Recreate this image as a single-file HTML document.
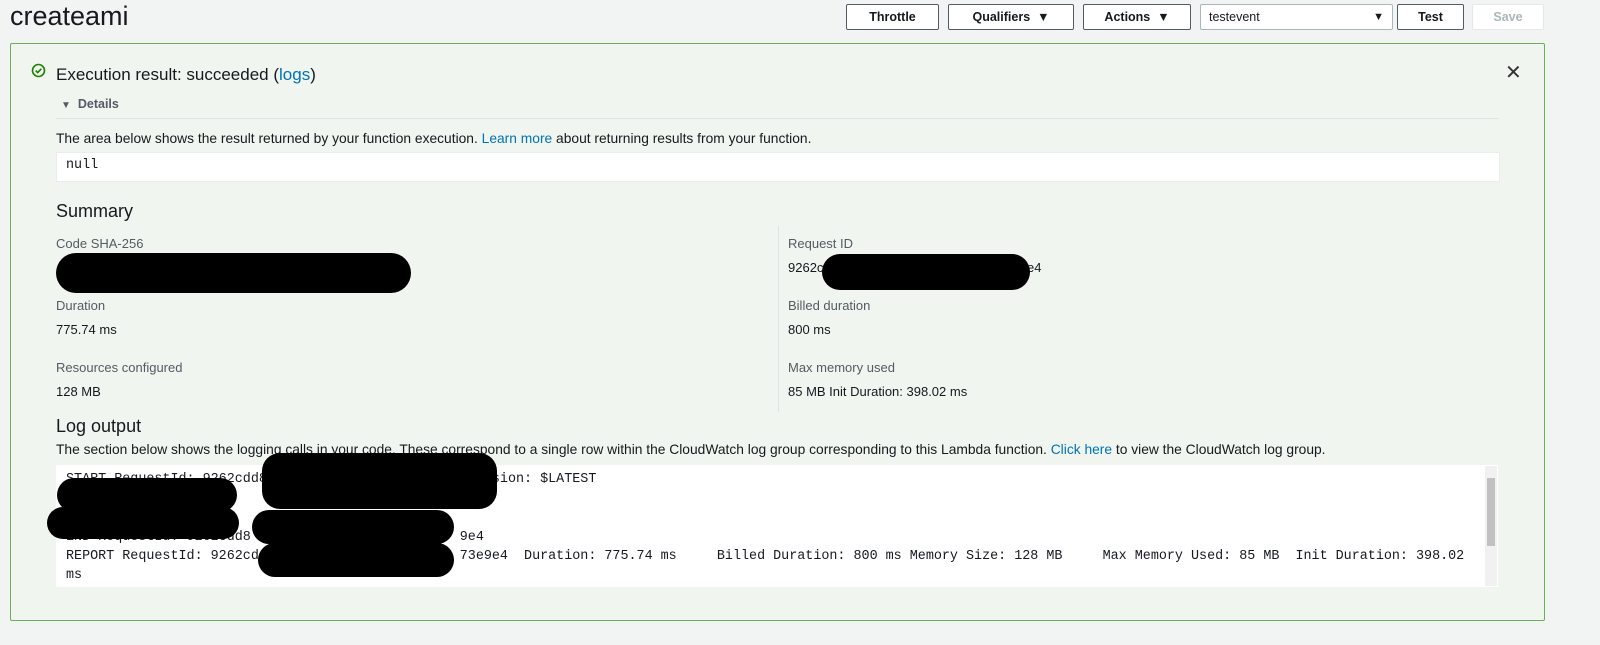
<!DOCTYPE html>
<html><head><style>
body{margin:0;width:1600px;height:645px;background:#f2f3f3;font-family:"Liberation Sans",sans-serif;color:#16191f;position:relative;overflow:hidden}
.a{position:absolute}
.btn{position:absolute;top:4px;height:26px;border:1px solid #545b64;border-radius:2px;background:#fff;font-size:12.5px;font-weight:bold;color:#16191f;display:flex;align-items:center;justify-content:center;box-sizing:border-box}
.lbl{position:absolute;font-size:13px;color:#545b64}
.val{position:absolute;font-size:13px;color:#16191f}
.blk{position:absolute;background:#000;border-radius:14px}
.mono{font-family:"Liberation Mono",monospace;font-size:13.4px;position:absolute;color:#16191f;white-space:pre}
a{color:#0073bb;text-decoration:none}
</style></head><body>
<div class="a" style="left:10px;top:1px;font-size:27px">createami</div>
<div class="btn" style="left:846px;width:93px">Throttle</div>
<div class="btn" style="left:948px;width:126px">Qualifiers&nbsp;&nbsp;▼</div>
<div class="btn" style="left:1083px;width:108px">Actions&nbsp;&nbsp;▼</div>
<div class="btn" style="left:1200px;width:193px;border-color:#aab7b8;justify-content:space-between;padding:0 8px;font-weight:normal">testevent<span style="font-size:11px">▼</span></div>
<div class="btn" style="left:1397px;width:67px">Test</div>
<div class="btn" style="left:1472px;width:72px;border-color:#e5e7e8;color:#aab7b8">Save</div>

<div class="a" style="left:10px;top:43px;width:1533px;height:576px;border:1px solid #6aaf55;background:#f0f5ef;border-radius:2px"></div>
<svg class="a" style="left:31px;top:63px" width="15" height="15" viewBox="0 0 15 15"><circle cx="7.5" cy="7.5" r="6" fill="none" stroke="#1d8102" stroke-width="1.6"/><path d="M4.7 7.6l2 2 3.6-3.8" fill="none" stroke="#1d8102" stroke-width="1.6"/></svg>
<div class="a" style="left:56px;top:65px;font-size:17px">Execution result: succeeded (<a>logs</a>)</div>
<div class="a" style="left:1505px;top:60px;font-size:20px;color:#333">✕</div>
<div class="a" style="left:61px;top:97px;font-size:12.5px;font-weight:bold;color:#545b64"><span style="font-size:10px">▼</span>&nbsp;&nbsp;Details</div>
<div class="a" style="left:56px;top:118px;width:1443px;border-top:1px solid #dfe3e3"></div>
<div class="a" style="left:56px;top:131px;font-size:13.8px">The area below shows the result returned by your function execution. <a>Learn more</a> about returning results from your function.</div>
<div class="a" style="left:56px;top:152px;width:1442px;height:28px;background:#fff;border:1px solid #eaeded"></div>
<div class="mono" style="left:66px;top:158px">null</div>
<div class="a" style="left:56px;top:201px;font-size:18px">Summary</div>
<div class="a" style="left:778px;top:226px;height:186px;border-left:1px solid #dfe3e3"></div>
<div class="lbl" style="left:56px;top:236px">Code SHA-256</div>
<div class="blk" style="left:56px;top:253px;width:355px;height:40px;border-radius:20px"></div>
<div class="lbl" style="left:56px;top:298px">Duration</div>
<div class="val" style="left:56px;top:322px">775.74 ms</div>
<div class="lbl" style="left:56px;top:360px">Resources configured</div>
<div class="val" style="left:56px;top:384px">128 MB</div>
<div class="lbl" style="left:788px;top:236px">Request ID</div>
<div class="val" style="left:788px;top:260px">9262c</div>
<div class="val" style="left:1027px;top:260px">e4</div>
<div class="blk" style="left:822px;top:254px;width:208px;height:36px;border-radius:18px"></div>
<div class="lbl" style="left:788px;top:298px">Billed duration</div>
<div class="val" style="left:788px;top:322px">800 ms</div>
<div class="lbl" style="left:788px;top:360px">Max memory used</div>
<div class="val" style="left:788px;top:384px">85 MB Init Duration: 398.02 ms</div>
<div class="a" style="left:56px;top:416px;font-size:18px">Log output</div>
<div class="a" style="left:56px;top:442px;font-size:13.8px">The section below shows the logging calls in your code. These correspond to a single row within the CloudWatch log group corresponding to this Lambda function. <a>Click here</a> to view the CloudWatch log group.</div>
<div class="a" style="left:56px;top:465px;width:1442px;height:122px;background:#fff"></div>
<div class="a" style="left:1485px;top:466px;width:12px;height:120px;background:#f1f1f1"></div>
<div class="a" style="left:1487px;top:478px;width:8px;height:68px;background:#c1c1c1"></div>
<div class="mono" style="left:66px;top:470px;line-height:19.2px">START RequestId: 9262cdd8                         Version: $LATEST
        8

END RequestId: 9262cdd8                          9e4
REPORT RequestId: 9262cd                         73e9e4  Duration: 775.74 ms     Billed Duration: 800 ms Memory Size: 128 MB     Max Memory Used: 85 MB  Init Duration: 398.02
ms</div>
<div class="blk" style="left:262px;top:453px;width:235px;height:56px;border-radius:18px"></div>
<div class="blk" style="left:57px;top:478px;width:180px;height:34px;border-radius:17px"></div>
<div class="blk" style="left:47px;top:507px;width:192px;height:32px;border-radius:16px"></div>
<div class="blk" style="left:252px;top:510px;width:202px;height:34px;border-radius:17px"></div>
<div class="blk" style="left:258px;top:543px;width:196px;height:34px;border-radius:17px"></div>
</body></html>
